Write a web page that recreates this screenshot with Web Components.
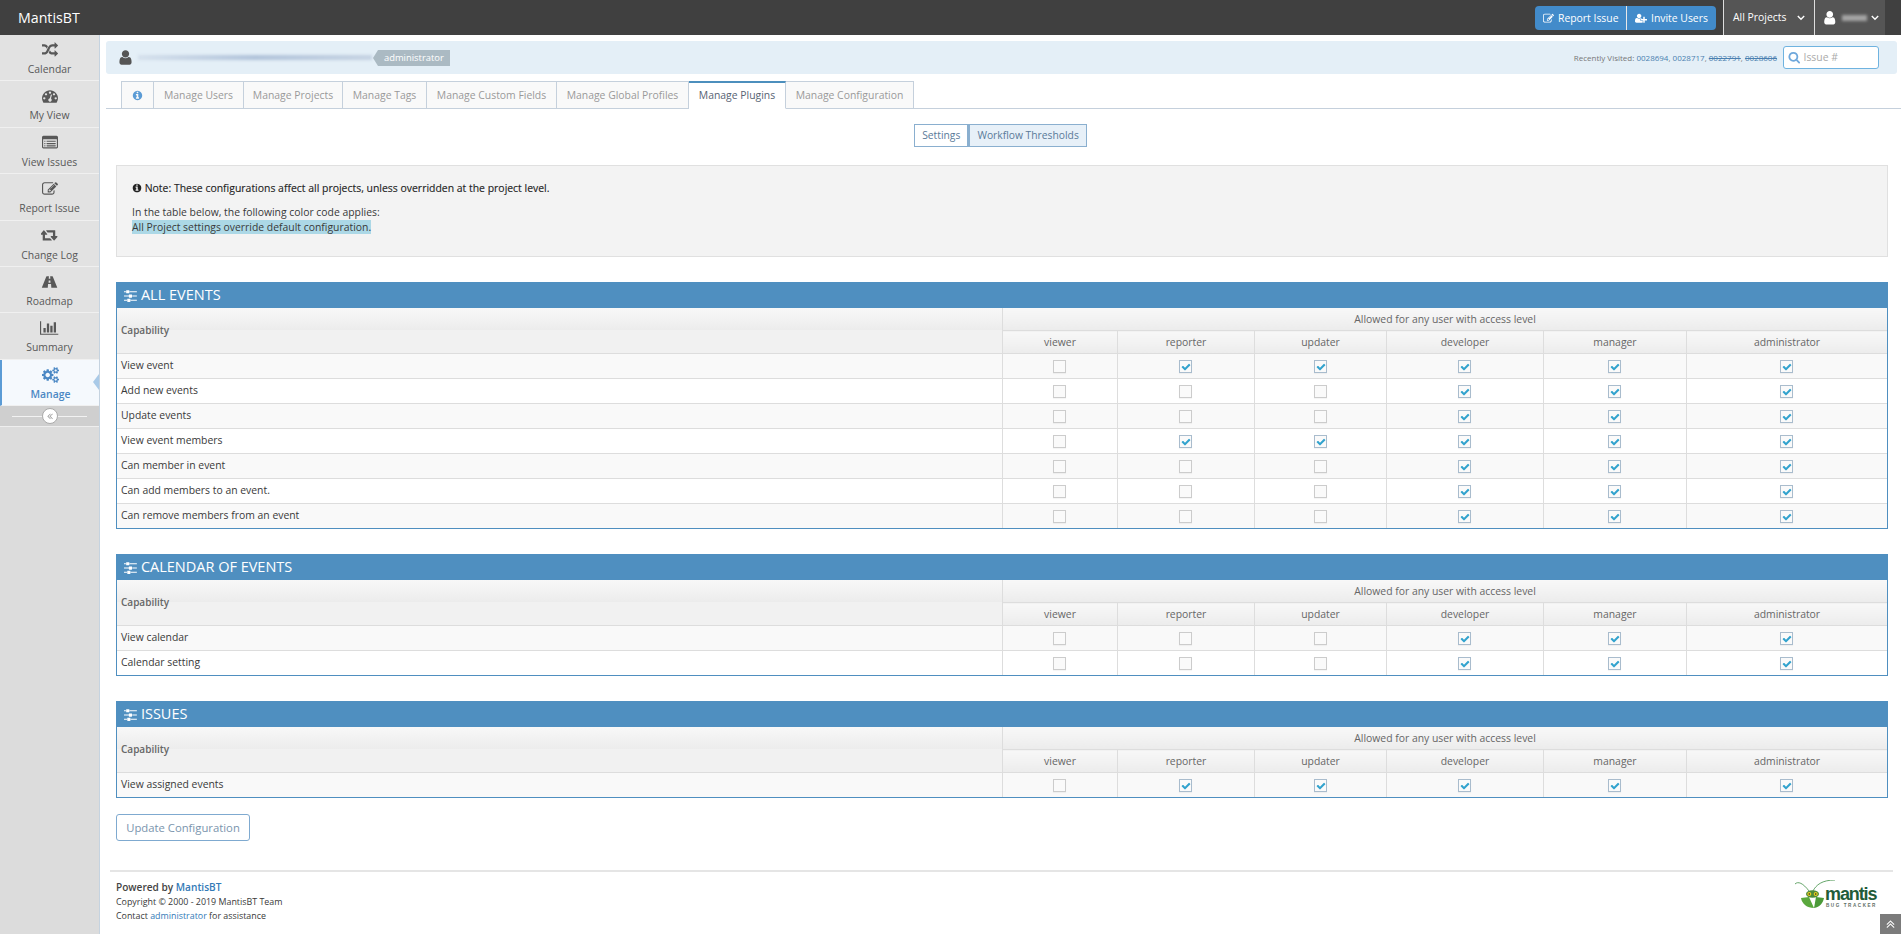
<!DOCTYPE html>
<html lang="en"><head><meta charset="utf-8"><title>MantisBT</title>
<style>
html,body{margin:0;height:100%;overflow:hidden;background:#fff;font:10.4px/1.4 "Open Sans",sans-serif;color:#393939}
body{display:flex;flex-direction:column;height:934px}
.row{display:flex;flex:1;min-height:0}
</style></head>
<body>
<mt-navbar></mt-navbar>
<div class="row">
  <mt-sidebar>
    <mt-side-item icon="random" label="Calendar"></mt-side-item>
    <mt-side-item icon="dashboard" label="My View"></mt-side-item>
    <mt-side-item icon="list" label="View Issues"></mt-side-item>
    <mt-side-item icon="edit" label="Report Issue"></mt-side-item>
    <mt-side-item icon="retweet" label="Change Log"></mt-side-item>
    <mt-side-item icon="road" label="Roadmap"></mt-side-item>
    <mt-side-item icon="chart" label="Summary"></mt-side-item>
    <mt-side-item icon="cogs" label="Manage" active></mt-side-item>
  </mt-sidebar>
  <mt-main>
    <mt-breadcrumb></mt-breadcrumb>
    <mt-tabs></mt-tabs>
    <mt-subnav></mt-subnav>
    <mt-note></mt-note>
    <mt-perms title="ALL EVENTS" rows='[["View event","011111"],["Add new events","000111"],["Update events","000111"],["View event members","011111"],["Can member in event","000111"],["Can add members to an event.","000111"],["Can remove members from an event","000111"]]'></mt-perms>
    <mt-perms title="CALENDAR OF EVENTS" rows='[["View calendar","000111"],["Calendar setting","000111"]]'></mt-perms>
    <mt-perms title="ISSUES" rows='[["View assigned events","011111"]]'></mt-perms>
    <mt-update></mt-update>
    <mt-footer></mt-footer>
  </mt-main>
</div>
<script>
const PATHS={
user:[1792,"M1536 1399q0 109-62.5 187t-150.5 78h-854q-88 0-150.5-78t-62.5-187q0-85 8.5-160.5t31.5-151.5 58.5-130 94-88.5 134.5-34.5q131 128 313 128t313-128q76 0 134.5 34.5t94 88.5 58.5 130 31.5 151.5 8.5 160.5zm-256-887q0 159-112.5 271.5t-271.5 112.5-271.5-112.5-112.5-271.5 112.5-271.5 271.5-112.5 271.5 112.5 112.5 271.5z"],
check:[1792,"M1671 566q0 40-28 68l-724 724-136 136q-28 28-68 28t-68-28l-136-136-362-362q-28-28-28-68t28-68l136-136q28-28 68-28t68 28l294 295 656-657q28-28 68-28t68 28l136 136q28 28 28 68z"],
info:[1792,"M1152 1376v-160q0-14-9-23t-23-9h-96v-512q0-14-9-23t-23-9h-320q-14 0-23 9t-9 23v160q0 14 9 23t23 9h96v320h-96q-14 0-23 9t-9 23v160q0 14 9 23t23 9h448q14 0 23-9t9-23zm-128-896v-160q0-14-9-23t-23-9h-192q-14 0-23 9t-9 23v160q0 14 9 23t23 9h192q14 0 23-9t9-23zm640 416q0 209-103 385.5t-279.5 279.5-385.5 103-385.5-103-279.5-279.5-103-385.5 103-385.5 279.5-279.5 385.5-103 385.5 103 279.5 279.5 103 385.5z"],
search:[1792,"M1216 832q0-185-131.5-316.5t-316.5-131.5-316.5 131.5-131.5 316.5 131.5 316.5 316.5 131.5 316.5-131.5 131.5-316.5zm512 832q0 52-38 90t-90 38q-54 0-90-38l-343-342q-179 124-399 124-143 0-273.5-55.5t-225-150-150-225-55.5-273.5 55.5-273.5 150-225 225-150 273.5-55.5 273.5 55.5 225 150 150 225 55.5 273.5q0 220-124 399l343 343q37 37 37 90z"],
random:[1792,"M666 481q-60 92-137 273-22-45-37-72.5t-40.5-63.5-51-56.5-63-35-81.5-14.5h-224q-14 0-23-9t-9-23v-192q0-14 9-23t23-9h224q250 0 410 225zm1126 799q0 14-9 23l-320 320q-9 9-23 9-13 0-22.5-9.5t-9.5-22.5v-192q-32 0-85 .5t-81 1-73-1-71-5-64-10.5-63-18.5-58-28.5-59-40-55-53.5-56-69.5q59-93 136-273 22 45 37 72.5t40.5 63.5 51 56.5 63 35 81.5 14.5h256v-192q0-14 9-23t23-9q12 0 24 10l319 319q9 9 9 23zm0-896q0 14-9 23l-320 320q-9 9-23 9-13 0-22.5-9.5t-9.5-22.5v-192h-256q-48 0-87 15t-69 45-51 61.5-45 77.5q-32 62-78 171-29 66-49.5 111t-54 105-64 100-74 83-90 68.5-106.5 42-128 16.5h-224q-14 0-23-9t-9-23v-192q0-14 9-23t23-9h224q48 0 87-15t69-45 51-61.5 45-77.5q32-62 78-171 29-66 49.5-111t54-105 64-100 74-83 90-68.5 106.5-42 128-16.5h256v-192q0-14 9-23t23-9q12 0 24 10l319 319q9 9 9 23z"],
dashboard:[1792,"M384 1152q0-53-37.5-90.5t-90.5-37.5-90.5 37.5-37.5 90.5 37.5 90.5 90.5 37.5 90.5-37.5 37.5-90.5zm192-448q0-53-37.5-90.5t-90.5-37.5-90.5 37.5-37.5 90.5 37.5 90.5 90.5 37.5 90.5-37.5 37.5-90.5zm428 481l101-382q6-26-7.5-48.5t-38.5-29.5-48 6.5-30 39.5l-101 382q-60 5-107 43.5t-63 98.5q-20 77 20 146t117 89 146-20 89-117q16-60-6-117t-72-91zm660-33q0-53-37.5-90.5t-90.5-37.5-90.5 37.5-37.5 90.5 37.5 90.5 90.5 37.5 90.5-37.5 37.5-90.5zm-640-640q0-53-37.5-90.5t-90.5-37.5-90.5 37.5-37.5 90.5 37.5 90.5 90.5 37.5 90.5-37.5 37.5-90.5zm448 192q0-53-37.5-90.5t-90.5-37.5-90.5 37.5-37.5 90.5 37.5 90.5 90.5 37.5 90.5-37.5 37.5-90.5zm320 448q0 261-141 483-19 29-54 29h-1402q-35 0-54-29-141-221-141-483 0-182 71-348t191-286 286-191 348-71 348 71 286 191 191 286 71 348z"],
list:[1792,"M384 1184v64q0 13-9.5 22.5t-22.5 9.5h-64q-13 0-22.5-9.5t-9.5-22.5v-64q0-13 9.5-22.5t22.5-9.5h64q13 0 22.5 9.5t9.5 22.5zm0-256v64q0 13-9.5 22.5t-22.5 9.5h-64q-13 0-22.5-9.5t-9.5-22.5v-64q0-13 9.5-22.5t22.5-9.5h64q13 0 22.5 9.5t9.5 22.5zm0-256v64q0 13-9.5 22.5t-22.5 9.5h-64q-13 0-22.5-9.5t-9.5-22.5v-64q0-13 9.5-22.5t22.5-9.5h64q13 0 22.5 9.5t9.5 22.5zm1152 512v64q0 13-9.5 22.5t-22.5 9.5h-960q-13 0-22.5-9.5t-9.5-22.5v-64q0-13 9.5-22.5t22.5-9.5h960q13 0 22.5 9.5t9.5 22.5zm0-256v64q0 13-9.5 22.5t-22.5 9.5h-960q-13 0-22.5-9.5t-9.5-22.5v-64q0-13 9.5-22.5t22.5-9.5h960q13 0 22.5 9.5t9.5 22.5zm0-256v64q0 13-9.5 22.5t-22.5 9.5h-960q-13 0-22.5-9.5t-9.5-22.5v-64q0-13 9.5-22.5t22.5-9.5h960q13 0 22.5 9.5t9.5 22.5zm128 672v-832q0-13-9.5-22.5t-22.5-9.5h-1472q-13 0-22.5 9.5t-9.5 22.5v832q0 13 9.5 22.5t22.5 9.5h1472q13 0 22.5-9.5t9.5-22.5zm128-1088v1088q0 66-47 113t-113 47h-1472q-66 0-113-47t-47-113v-1088q0-66 47-113t113-47h1472q66 0 113 47t47 113z"],
edit:[1792,"M888 1184l116-116-152-152-116 116v56h96v96h56zm440-720q-16-16-33 1l-350 350q-17 17-1 33t33-1l350-350q17-17 1-33zm80 594v190q0 119-84.5 203.5t-203.5 84.5h-832q-119 0-203.5-84.5t-84.5-203.5v-832q0-119 84.5-203.5t203.5-84.5h832q63 0 117 25 15 7 18 23 3 17-9 29l-49 49q-14 14-32 8-23-6-45-6h-832q-66 0-113 47t-47 113v832q0 66 47 113t113 47h832q66 0 113-47t47-113v-126q0-13 9-22l64-64q15-15 35-7t20 29zm-96-738l288 288-672 672h-288v-288zm444 132l-92 92-288-288 92-92q28-28 68-28t68 28l152 152q28 28 28 68t-28 68z"],
retweet:[1920,"M1216 1376q0 13-9.5 22.5t-22.5 9.5h-960q-8 0-13.5-2t-9-7-5.5-8-3-11.5-1-11.5v-600h-192q-26 0-45-19t-19-45q0-24 15-41l320-384q19-22 49-22t49 22l320 384q15 17 15 41 0 26-19 45t-45 19h-192v384h576q16 0 25 11l160 192q7 10 7 21zm640-416q0 24-15 41l-320 384q-20 23-49 23t-49-23l-320-384q-15-17-15-41 0-26 19-45t45-19h192v-384h-576q-16 0-25-12l-160-192q-7-9-7-20 0-13 9.5-22.5t22.5-9.5h960q8 0 13.5 2t9 7 5.5 8 3 11.5 1 11.5v600h192q26 0 45 19t19 45z"],
road:[1920,"M640 240h250l-20 300h180l-20-300h250q30 0 42 30l500 1250q10 30-22 30h-640l-30-420h-340l-30 420h-640q-32 0-22-30l500-1250q12-30 42-30zm226 500l-16 250h220l-16-250z"],
chart:[2048,"M640 896v512h-256v-512h256zm384-512v1024h-256v-1024h256zm1024 1152v128h-2048v-1536h128v1408h1920zm-640-896v768h-256v-768h256zm384-384v1152h-256v-1152h256z"],
cogs:[1920,"M896 896q0-106-75-181t-181-75-181 75-75 181 75 181 181 75 181-75 75-181zm768 512q0-52-38-90t-90-38-90 38-38 90q0 53 37.5 90.5t90.5 37.5 90.5-37.5 37.5-90.5zm0-1024q0-52-38-90t-90-38-90 38-38 90q0 53 37.5 90.5t90.5 37.5 90.5-37.5 37.5-90.5zm-384 421v185q0 10-7 19.5t-16 10.5l-155 24q-11 35-32 76 34 48 90 115 7 11 7 20 0 12-7 19-23 30-82.5 89.5t-78.5 59.5q-11 0-21-7l-115-90q-37 19-77 31-11 108-23 155-7 24-30 24h-186q-11 0-20-7.5t-10-17.5l-23-153q-34-10-75-31l-118 89q-7 7-20 7-11 0-21-8-144-133-144-160 0-9 7-19 10-14 41-53t47-61q-23-44-35-82l-152-24q-10-1-17-9.5t-7-19.5v-185q0-10 7-19.5t16-10.5l155-24q11-35 32-76-34-48-90-115-7-11-7-20 0-12 7-20 22-30 82-89t79-59q11 0 21 7l115 90q34-18 77-32 11-108 23-154 7-24 30-24h186q11 0 20 7.5t10 17.5l23 153q34 10 75 31l118-89q8-7 20-7 11 0 21 8 144 133 144 160 0 8-7 19-12 16-42 54t-45 60q23 48 34 82l152 23q10 2 17 10.5t7 19.5zm640 533v140q0 16-149 31-12 27-30 52 51 113 51 138 0 4-4 7-122 71-124 71-8 0-46-47t-52-68q-20 2-30 2t-30-2q-14 21-52 68t-46 47q-2 0-124-71-4-3-4-7 0-25 51-138-18-25-30-52-149-15-149-31v-140q0-16 149-31 13-29 30-52-51-113-51-138 0-4 4-7 4-2 35-20t59-34 30-16q8 0 46 46.5t52 67.5q20-2 30-2t30 2q51-71 92-112l6-2q4 0 124 70 4 3 4 7 0 25-51 138 17 23 30 52 149 15 149 31zm0-1024v140q0 16-149 31-12 27-30 52 51 113 51 138 0 4-4 7-122 71-124 71-8 0-46-47t-52-68q-20 2-30 2t-30-2q-14 21-52 68t-46 47q-2 0-124-71-4-3-4-7 0-25 51-138-18-25-30-52-149-15-149-31v-140q0-16 149-31 13-29 30-52-51-113-51-138 0-4 4-7 4-2 35-20t59-34 30-16q8 0 46 46.5t52 67.5q20-2 30-2t30 2q51-71 92-112l6-2q4 0 124 70 4 3 4 7 0 25-51 138 17 23 30 52 149 15 149 31z"],
sliders:[1536,"M352 1408v128h-352v-128h352zm352-128q26 0 45 19t19 45v256q0 26-19 45t-45 19h-256q-26 0-45-19t-19-45v-256q0-26 19-45t45-19h256zm160-384v128h-864v-128h864zm-640-512v128h-224v-128h224zm1312 1024v128h-736v-128h736zm-960-1152q26 0 45 19t19 45v256q0 26-19 45t-45 19h-256q-26 0-45-19t-19-45v-256q0-26 19-45t45-19h256zm320 512q26 0 45 19t19 45v256q0 26-19 45t-45 19h-256q-26 0-45-19t-19-45v-256q0-26 19-45t45-19h256zm640 128v128h-544v-128h544zm0-512v128h-864v-128h864z"],
userplus:[2048,"M704 896q-159 0-271.5-112.5t-112.5-271.5 112.5-271.5 271.5-112.5 271.5 112.5 112.5 271.5-112.5 271.5-271.5 112.5zm960 128h352q13 0 22.5 9.5t9.5 22.5v192q0 13-9.5 22.5t-22.5 9.5h-352v352q0 13-9.5 22.5t-22.5 9.5h-192q-13 0-22.5-9.5t-9.5-22.5v-352h-352q-13 0-22.5-9.5t-9.5-22.5v-192q0-13 9.5-22.5t22.5-9.5h352v-352q0-13 9.5-22.5t22.5-9.5h192q13 0 22.5 9.5t9.5 22.5v352zm-736 224q0 52 38 90t90 38h256v238q-68 50-171 50h-874q-121 0-194-69t-73-190q0-53 3.5-103.5t14-109 26.5-108.5 43-97.5 62-81 85.5-53.5 111.5-20q19 0 39 17 79 61 154.5 91.5t164.5 30.5 164.5-30.5 154.5-91.5q20-17 39-17 132 0 217 96h-223q-52 0-90 38t-38 90v192z"],
dleft:[1792,"M1011 1376q0 13-10 23l-50 50q-10 10-23 10t-23-10l-466-466q-10-10-10-23t10-23l466-466q10-10 23-10t23 10l50 50q10 10 10 23t-10 23l-393 393 393 393q10 10 10 23zm384 0q0 13-10 23l-50 50q-10 10-23 10t-23-10l-466-466q-10-10-10-23t10-23l466-466q10-10 23-10t23 10l50 50q10 10 10 23t-10 23l-393 393 393 393q10 10 10 23z"]
};
function svg(name,size,extra=''){const [w,d]=PATHS[name];const s=size/1792;return `<svg width="${Math.round(w*s*10)/10}" height="${size}" viewBox="0 0 ${w} 1792" fill="currentColor" style="display:inline-block;vertical-align:middle;flex:none;${extra}"><path d="${d}"/></svg>`;}
function chevron(){return `<svg width="8" height="6" viewBox="0 0 8 6" fill="none" stroke="currentColor" stroke-width="1.4" style="display:inline-block;vertical-align:middle;flex:none"><path d="M.8 1l3.2 3.2L7.2 1"/></svg>`;}
function def(tag,html){customElements.define(tag,class extends HTMLElement{constructor(){super();this.attachShadow({mode:'open'});}connectedCallback(){this.shadowRoot.innerHTML=typeof html==='function'?html(this):html;}});}

def('mt-navbar',`<style>
:host{display:flex;align-items:stretch;height:35px;background:#404040;color:#fff;flex:none;padding-right:16px}
.brand{font-size:14.2px;line-height:35px;padding-left:18px;flex:1}
.btns{display:flex;align-self:flex-start;margin-top:6px;height:24px;margin-right:7px}
.b{background:#428bca;color:#fff;font-size:10.4px;line-height:24px;box-sizing:border-box;padding-left:8px;display:flex;align-items:center;gap:4px;white-space:nowrap}
.b:first-child{border-radius:4px 0 0 4px;border-right:1px solid #e8e8e8;width:92px}
.b:last-child{border-radius:0 4px 4px 0;width:89px}
.dd{background:#555;border-left:1px solid #ddd;display:flex;align-items:center;font-size:10.4px;box-sizing:border-box;white-space:nowrap}
.p{width:91px;gap:11px;padding-left:9px}.u{width:71px;padding-left:7px;gap:2px}
.blur{width:25px;height:6px;background:#a4a4a4;filter:blur(1.6px);margin:0 2px}
</style>
<div class="brand">MantisBT</div>
<div class="btns"><div class="b">${svg('edit',11)}<span>Report Issue</span></div><div class="b">${svg('userplus',10.5)}<span>Invite Users</span></div></div>
<div class="dd p"><span>All Projects</span>${chevron()}</div>
<div class="dd u">${svg('user',15.5)}<span class="blur"></span>${chevron()}</div>`);

def('mt-sidebar',`<style>
:host{display:block;width:100px;flex:none;background:#dcdcdc;border-right:1px solid #c5d3e0;box-sizing:border-box}
.c{height:20px;background:#cfcfcf;border-bottom:1px solid #eee;display:flex;align-items:center;justify-content:center;position:relative}
.l{position:absolute;left:12px;right:12px;top:10px;height:1px;background:#f2f2f2}
.o{position:relative;width:14px;height:14px;border-radius:50%;background:#fff;border:1px solid #aaa;display:flex;align-items:center;justify-content:center;color:#999}
</style><slot></slot><div class="c"><span class="l"></span><span class="o">${svg('dleft',10)}</span></div>`);

def('mt-side-item',h=>{const a=h.hasAttribute('active');return `<style>
:host{display:block;height:46.4px;box-sizing:border-box;border-bottom:1px solid #f0f0f0;background:${a?'#f5f9fd':'#e2e2e2'};position:relative;text-align:center;color:${a?'#4b88c4':'#585858'};${a?'border-left:2px solid #5b9bd5;':''}}
.i{display:flex;align-items:center;justify-content:center;padding-top:3px;box-sizing:border-box;height:27px}
.t{font-size:10.4px;line-height:15px;${a?'font-weight:600;':''}}
.ar{position:absolute;right:0;top:14px;border:8px solid transparent;border-right-color:#a9cae8;border-left:0;border-right-width:6px}
</style><div class="i">${svg(h.getAttribute('icon'),16)}</div><div class="t">${h.getAttribute('label')}</div>${a?'<span class="ar"></span>':''}`;});

def('mt-main',`<style>:host{display:block;flex:1;min-width:0;padding-top:6px;box-sizing:border-box}</style><slot></slot>`);

def('mt-breadcrumb',`<style>
:host{display:flex;align-items:center;height:33px;margin:0 4px 0 6px;background:#e4eff7;border-radius:3px;padding:0 18px 0 11px;box-sizing:border-box;color:#555}
.blur{width:234px;height:5px;margin-left:4px;background:linear-gradient(90deg,#d5e0ec,#b0c2d9 50%,#c5d2e2);filter:blur(1.5px)}
.tag{position:relative;background:#abbac3;color:#fff;font-size:9.4px;height:16px;line-height:16px;padding:0 6px;margin-left:6px}
.tag:before{content:"";position:absolute;left:-5px;top:0;border:8px solid transparent;border-left:0;border-right:5px solid #abbac3}
.sp{flex:1}
.rv{font-size:8px;color:#777;margin-right:6px;white-space:nowrap}
.rv a,.rv s{color:#4a7fb0}
.in{width:96px;height:23px;background:#fff;border:1px solid #6fb3e0;border-radius:3px;box-sizing:border-box;display:flex;align-items:center;padding-left:4px;gap:3px;color:#6fa8dc;font-size:10.4px}
.in span{color:#aaa}
</style>${svg('user',17,'color:#555;')}<span class="blur"></span><span class="tag">administrator</span><span class="sp"></span>
<span class="rv">Recently Visited: <a>0028694</a>, <a>0028717</a>, <s>0022791</s>, <s>0028606</s></span>
<div class="in">${svg('search',12.5)}<span>Issue #</span></div>`);

def('mt-tabs',()=>{const tabs=[['Manage Users',90],['Manage Projects',99],['Manage Tags',84],['Manage Custom Fields',130],['Manage Global Profiles',132],['Manage Plugins',97],['Manage Configuration',128]];
return `<style>
:host{display:flex;margin:7px 0 0 6px;padding-left:15px;border-bottom:1px solid #c5d0dc;height:28px;box-sizing:border-box}
.t{height:28px;flex:none;box-sizing:border-box;border:1px solid #c5d0dc;border-left-width:0;background:#f9f9f9;color:#999;font-size:10.4px;white-space:nowrap;display:flex;align-items:center;justify-content:center}
.info{border-left-width:1px;color:#5b9bd5;width:33px}
.a{background:#fff;color:#576373;border-top:2px solid #4c8fbd;border-bottom-color:#fff}
</style><div class="t info">${svg('info',11)}</div>`+tabs.map(([t,w])=>`<div class="t${t==='Manage Plugins'?' a':''}" style="width:${w}px">${t}</div>`).join('');});

def('mt-subnav',`<style>
:host{display:flex;justify-content:center;margin-top:15px;height:23px}
.b{border:1px solid #8aafcf;background:#fff;color:#5a7a99;font-size:10.3px;line-height:21px;padding:0 7px;white-space:nowrap}
.b+.b{background:#e7f0f8;border-width:1px 1px 1px 2px}
</style><div class="b">Settings</div><div class="b">Workflow Thresholds</div>`);

def('mt-note',`<style>
:host{display:block;margin:18px 13px 25px 16px;height:92px;background:#f3f3f3;border:1px solid #e0e0e0;box-sizing:border-box;padding:13px 15px;color:#393939}
.n{font-size:10.45px;line-height:18px;margin-bottom:8px;color:#222;-webkit-text-stroke:.12px #222;white-space:nowrap}
.l{font-size:10.4px;line-height:15px}
mark{background:#acd8e6;color:#393939;display:inline-block;line-height:14px}
</style><div class="n">${svg('info',10,'margin-top:-2px;')} Note: These configurations affect all projects, unless overridden at the project level.</div>
<div class="l">In the table below, the following color code applies:<br><mark>All Project settings override default configuration.</mark></div>`);

def('mt-checkbox',h=>`<style>
:host{display:inline-block;width:13px;height:13px;box-sizing:border-box;border:1px solid ${h.hasAttribute('on')?'#a9bccd':'#ccc'};background:#fafafa;position:relative;vertical-align:middle;color:#32a3ce;box-shadow:0 1px 1px rgba(0,0,0,.04);margin-right:1px}
svg{position:absolute;left:1px;top:1px}
</style>${h.hasAttribute('on')?svg('check',10):''}`);

def('mt-perms',h=>{const rows=JSON.parse(h.getAttribute('rows'));const lv=['viewer','reporter','updater','developer','manager','administrator'];
return `<style>
:host{display:block;margin:0 13px 25px 16px}
.h{height:26px;background:#4f8fc0;color:#fff;font-size:14.5px;line-height:26px;padding-left:8px;display:flex;align-items:center;gap:4px}
.w{border:1px solid #4f8fc0;border-top:0}
table{width:100%;border-collapse:collapse;table-layout:fixed;font-size:10.4px}
th{font-weight:400;color:#666;background:linear-gradient(#f8f8f8,#ececec);border:1px solid #ddd;height:22.5px;padding:1px 0 0;box-sizing:border-box;font-size:10.4px}
th.c{text-align:left;padding:0 0 0 4px;font-weight:600;font-size:10px;background:linear-gradient(#f8f8f8,#ececec) 0 0/100% 22px no-repeat,#f1f1f1}
td{border:1px solid #ddd;height:25px;padding:0;box-sizing:border-box;text-align:center;color:#393939}
td:first-child{text-align:left;padding-left:4px}
tr:first-child th{border-top:0}
th:first-child,td:first-child{border-left:0}th:last-child,td:last-child{border-right:0}
tbody tr:last-child td{border-bottom:0}
tbody tr:nth-child(odd) td{background:#f9f9f9}
</style><div class="h">${svg('sliders',15)}<span>${h.getAttribute('title')}</span></div><div class="w"><table>
<colgroup><col style="width:885.5px"><col style="width:115px"><col style="width:137px"><col style="width:132px"><col style="width:157px"><col style="width:143px"><col></colgroup>
<thead><tr><th class="c" rowspan="2">Capability</th><th colspan="6">Allowed for any user with access level</th></tr>
<tr>${lv.map(l=>`<th>${l}</th>`).join('')}</tr></thead>
<tbody>${rows.map(([n,b])=>`<tr><td>${n}</td>${[...b].map(x=>`<td><mt-checkbox ${x==='1'?'on':''}></mt-checkbox></td>`).join('')}</tr>`).join('')}</tbody></table></div>`;});

def('mt-update',`<style>
:host{display:block;margin:-9px 0 0 16px}
.b{display:inline-block;height:27px;width:134px;text-align:center;box-sizing:border-box;border:1px solid #7faad0;border-radius:3px;background:#fff;color:#7a94ad;font-size:11.3px;line-height:25px}
</style><div class="b">Update Configuration</div>`);

def('mt-footer',`<style>
:host{display:flex;justify-content:space-between;margin:29px 8px 0 10px;border-top:2px solid #e5e5e5;padding:7px 0 0 6px;color:#393939}
.p{font-size:10.1px;font-weight:600;line-height:16px;color:#444}.p a{color:#337ab7}
.s{font-size:8.9px;line-height:13.5px}.s a{color:#337ab7}
.logo{display:block;margin:1px 15px 0 0;height:30px;position:relative;width:84px}
.logo svg{position:absolute;left:0;top:0}
.tx{position:absolute;left:31px;top:4px;font:700 18px/20px "Liberation Sans",sans-serif;color:#1f5c3a;letter-spacing:-1.1px}
.bt{position:absolute;left:32px;top:23px;font:700 4.6px/6px "Liberation Sans",sans-serif;color:#5f6f66;letter-spacing:1.55px;white-space:nowrap}
.up{position:fixed;right:0;bottom:0;width:21px;height:20px;background:#7b7b7b;color:#fff;display:flex;align-items:center;justify-content:center}
</style><div><div class="p">Powered by <a>MantisBT</a></div><div class="s">Copyright © 2000 - 2019 MantisBT Team</div><div class="s">Contact <a>administrator</a> for assistance</div></div>
<div class="logo"><svg width="42" height="30" viewBox="0 0 42 30"><path d="M1 4C4 1 9 3 15 11" fill="none" stroke="#3f8f45" stroke-width=".8"/><path d="M19 11C22 5 28 0 41 0" fill="none" stroke="#3f8f45" stroke-width=".8"/><path d="M7 18L15 17 20 28C13 28 8 24 7 18z" fill="#5aa83d"/><path d="M30 18L22 17 20 28C26 27 29 23 30 18z" fill="#4b9a38"/><ellipse cx="18.5" cy="14" rx="6.5" ry="3.8" fill="#4e8a3a"/><circle cx="15.3" cy="14" r="2" fill="#e8d020"/><circle cx="21.7" cy="14" r="2" fill="#e8d020"/><circle cx="15.3" cy="14" r=".8" fill="#222"/><circle cx="21.7" cy="14" r=".8" fill="#222"/></svg><span class="tx">mantis</span><span class="bt">BUG TRACKER</span></div>
<span class="up">${svg('dleft',14,'transform:rotate(90deg);')}</span>`);
</script>
</body></html>
